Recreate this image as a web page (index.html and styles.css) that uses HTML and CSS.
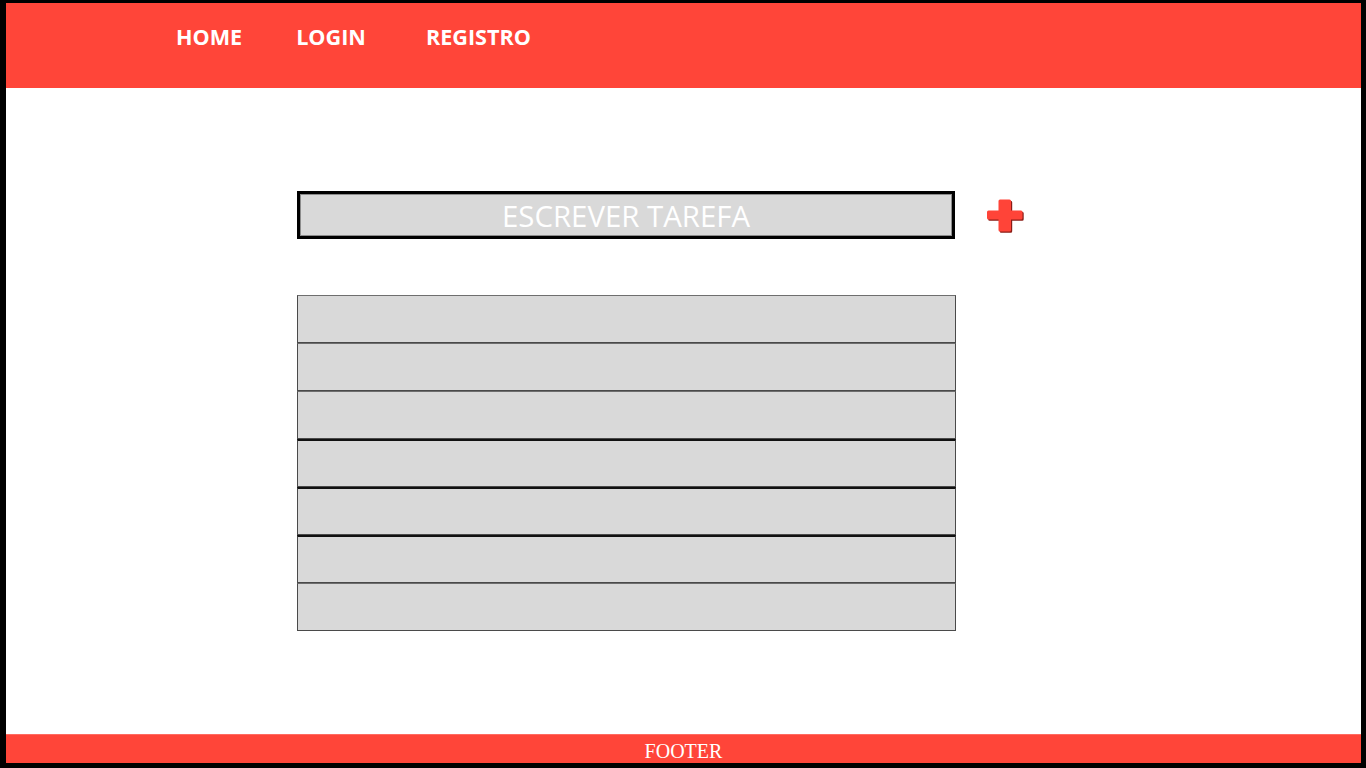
FILE: index.html
```html
<!DOCTYPE html>
<html lang="pt">
<head>
<meta charset="utf-8">
<title>Tarefas</title>
<link rel="stylesheet" href="styles.css">
</head>
<body>
<div class="frame">
  <header class="topbar">
    <nav class="nav">
      <a class="nav-link home" href="#">HOME</a>
      <a class="nav-link login" href="#">LOGIN</a>
      <a class="nav-link reg" href="#">REGISTRO</a>
    </nav>
  </header>
  <main class="main">
    <div class="entry-row">
      <div class="entry">ESCREVER TAREFA</div>
      <button class="add" aria-label="Adicionar">
        <svg width="40" height="38" viewBox="0 0 40 38">
          <path d="M14 3.5h9.5a1.5 1.5 0 0 1 1.5 1.5v9.5h10a1.5 1.5 0 0 1 1.5 1.5v6a1.5 1.5 0 0 1-1.5 1.5h-10v10.5a1.5 1.5 0 0 1-1.5 1.5H14a1.5 1.5 0 0 1-1.5-1.5V23.5H2.5A1.5 1.5 0 0 1 1 22v-6a1.5 1.5 0 0 1 1.5-1.5h10V5a1.5 1.5 0 0 1 1.5-1.5z" fill="#8a1d16" transform="translate(1.2 1.2)"/>
          <path d="M14 3.5h9.5a1.5 1.5 0 0 1 1.5 1.5v9.5h10a1.5 1.5 0 0 1 1.5 1.5v6a1.5 1.5 0 0 1-1.5 1.5h-10v10.5a1.5 1.5 0 0 1-1.5 1.5H14a1.5 1.5 0 0 1-1.5-1.5V23.5H2.5A1.5 1.5 0 0 1 1 22v-6a1.5 1.5 0 0 1 1.5-1.5h10V5a1.5 1.5 0 0 1 1.5-1.5z" fill="#ff4438"/>
        </svg>
      </button>
    </div>
    <ul class="tasks">
      <li class="task"></li>
      <li class="task"></li>
      <li class="task"></li>
      <li class="task dark"></li>
      <li class="task dark"></li>
      <li class="task dark"></li>
      <li class="task"></li>
    </ul>
  </main>
  <footer class="footer">FOOTER</footer>
</div>
</body>
</html>
```
FILE: styles.css
```css
* { box-sizing: border-box; }
html, body { margin: 0; padding: 0; background: #fff; }
body { width: 1366px; height: 768px; overflow: hidden; }

.frame {
  width: 1366px;
  height: 768px;
  border-style: solid;
  border-color: #000;
  border-width: 3px 5px 5px 6px;
  display: flex;
  flex-direction: column;
  background: #fff;
}

.topbar {
  height: 85px;
  background: #ff4539;
  flex: none;
}
.nav {
  display: flex;
  padding: 20px 0 0 170px;
  font-family: "Open Sans", sans-serif;
  font-weight: 700;
  font-size: 21.6px;
  line-height: 28px;
}
.nav-link { color: #fff; text-decoration: none; }
.home { margin-right: 54px; }
.login { margin-right: 60px; }

.main {
  flex: 1;
  padding: 103px 0 0 291px;
}
.entry-row { display: flex; align-items: center; }
.entry {
  width: 658px;
  height: 48px;
  border: 3px solid #000;
  box-shadow: inset 0 0 0 1px #8c8c8c;
  background: #d9d9d9;
  color: #fff;
  font-family: "Open Sans", sans-serif;
  font-size: 29.4px;
  line-height: 44px;
  text-align: center;
}
.add {
  margin-left: 31px;
  padding: 0;
  border: 0;
  background: none;
  width: 40px;
  height: 38px;
  display: block;
}
.add svg { display: block; }

.tasks {
  list-style: none;
  margin: 56px 0 0;
  padding: 0;
  width: 659px;
}
.task {
  height: 48px;
  background: #d9d9d9;
  border: 1px solid #4a4a4a;
  border-top-color: #6e6e6e;
}
.task.dark { border-top: 2px solid #111; }

.footer {
  flex: none;
  height: 29px;
  background: #ff4539;
  border-top: 1px solid #ff6a60;
  color: #fff;
  font-family: "Liberation Serif", serif;
  font-size: 20px;
  line-height: 32px;
  text-align: center;
}
```
